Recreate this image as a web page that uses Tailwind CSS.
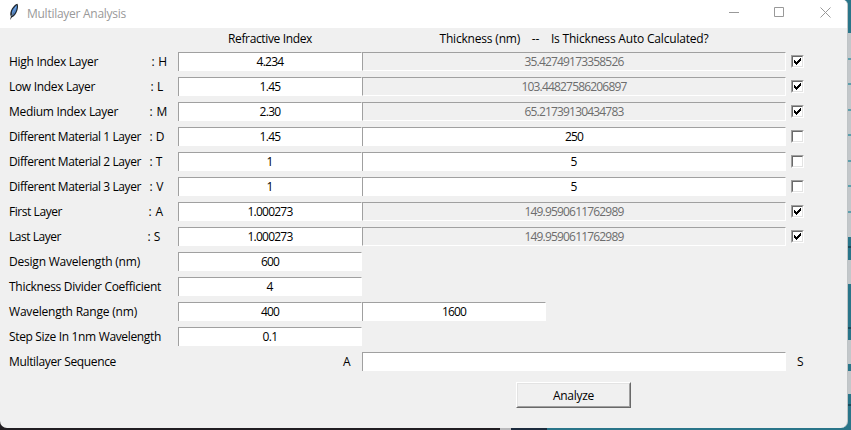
<!DOCTYPE html>
<html lang="en">
<head>
<meta charset="utf-8">
<title>Multilayer Analysis</title>
<script src="https://cdn.jsdelivr.net/npm/@tailwindcss/browser@4"></script>
</head>
<body class="w-[851px] h-[430px] overflow-hidden bg-[#211e22] font-['Open_Sans','Noto_Sans',sans-serif] text-[12px] leading-[19px] text-black relative">
<!-- desktop behind the window -->
<svg class="absolute inset-0" width="851" height="430" shape-rendering="crispEdges">
<rect x="500" y="426" width="11" height="4" fill="#b9b9bb"/><rect x="511" y="426" width="36" height="4" fill="#1c2b3d"/><rect x="547" y="426" width="304" height="4" fill="#2a7589"/>
<rect x="840" width="11" height="430" fill="#c3c7ca"/>
<g fill="#2a7589"><rect x="840" width="11" height="33"/><rect x="840" y="237" width="11" height="23"/><rect x="840" y="284" width="11" height="56"/><rect x="840" y="364" width="11" height="7"/><rect x="840" y="394" width="11" height="36"/></g>
<g fill="#5f9eab"><rect x="840" y="58" width="11" height="2"/><rect x="840" y="83" width="11" height="2"/><rect x="840" y="109" width="11" height="2"/><rect x="840" y="134" width="11" height="2"/><rect x="840" y="160" width="11" height="2"/><rect x="840" y="185" width="11" height="2"/><rect x="840" y="211" width="11" height="2"/></g>
<g fill="#174c5e"><rect x="840" y="246" width="11" height="2"/><rect x="840" y="327" width="11" height="2"/><rect x="840" y="404" width="11" height="2"/></g>
</svg>
<main class="relative w-[848px] h-[428px] bg-[#f0f0f0] rounded-b-[7px] rounded-tr-[5px] overflow-hidden border-r border-[#bfc4c6]">
<header class="h-7 bg-white flex items-center text-[#999]">
<svg class="ml-[9px] -mt-1 shrink-0" width="10" height="18" viewBox="0 0 10 18"><path d="M8.4.8C9.6 2.600 9 7 7.300 10 6.200 12 4.500 14 3 14.200L1 17l.9-3.500C.5 11.500 1.500 8 3 5.500 4.800 2.800 6.500 1.200 8.400.8Z" fill="#23292f"/><path d="M7.800 2C8.200 5 7.200 8 5.400 10.800L3.500 12.800 6.500 5 3 11.500C2.500 9.500 3.200 7.600 4.300 5.800Z" fill="#4c8ad8"/><path d="M7 3.500 2.600 13" stroke="#a9cdf5" stroke-width=".6"/></svg>
<span class="ml-2 whitespace-pre -mt-0.5" data-w="99">Multilayer Analysis</span>
<svg class="ml-auto mr-[16px] -mt-0.5" width="102" height="12" viewBox="0 0 102 12" fill="none" stroke="#999"><path d="M0 5.500h10M45.500.5h9v9h-9ZM91.500.5l10 10M101.500.5l-10 10"/></svg>
</header>
<div class="h-6 flex items-start pt-px">
<div class="ml-[178px] w-[184px] flex justify-center"><span class="whitespace-pre" data-w="84">Refractive Index</span></div>
<div class="w-[424px] flex justify-center"><span class="whitespace-pre" data-w="269">Thickness (nm)    --    Is Thickness Auto Calculated?</span></div>
</div>
<div id="rows"></div>
<div class="h-[25px] flex">
<div class="ml-[9px] w-[334px]"><span class="whitespace-pre" data-w="107">Multilayer Sequence</span></div>
<div class="w-[19px]"><span data-w="8">A</span></div>
<div class="w-[424px] h-[19px] bg-white border-t border-l border-r border-t-[#a0a0a0] border-l-[#a0a0a0] border-r-white"></div>
<span class="ml-[11px]" data-w="6">S</span>
</div>
<button class="mt-[5px] ml-[516px] w-[115px] h-[26px] border border-t-white border-l-white border-r-[#696969] border-b-[#696969] flex">
<span class="w-full h-full border border-t-[#e3e3e3] border-l-[#e3e3e3] border-r-[#a0a0a0] border-b-[#a0a0a0] flex justify-center items-center"><span data-w="41">Analyze</span></span>
</button>
</main>
<script>
const rows = [
 ['High Index Layer',89,'H',151,16,'4.234',27,'35.42749173358526',99,1],
 ['Low Index Layer',86,'L',150,13,'1.45',21,'103.44827586206897',105,1],
 ['Medium Index Layer',109,'M',149,18,'2.30',21,'65.21739130434783',99,1],
 ['Different Material 1 Layer',132,'D',149,15,'1.45',21,'250',18,0],
 ['Different Material 2 Layer',132,'T',149,13,'1',6,'5',6,0],
 ['Different Material 3 Layer',132,'V',149,14,'1',6,'5',6,0],
 ['First Layer',53,'A',148,15,'1.000273',45,'149.9590611762989',99,1],
 ['Last Layer',52,'S',147,13,'1.000273',45,'149.9590611762989',99,1],
 ['Design Wavelength (nm)',131,'',0,0,'600',18],
 ['Thickness Divider Coefficient',152,'',0,0,'4',6],
 ['Wavelength Range (nm)',128,'',0,0,'400',18,'1600',24],
 ['Step Size In 1nm Wavelength',152,'',0,0,'0.1',15]
];
const text = (t, w) => `<span class="whitespace-pre" data-w="${w}">${t}</span>`;
const check = on => `<div class="ml-[5px] mt-[3px] w-[13px] h-[13px] border border-t-[#a0a0a0] border-l-[#a0a0a0] border-r-white border-b-white"><div class="w-[11px] h-[11px] bg-white border border-t-[#696969] border-l-[#696969] border-r-[#e3e3e3] border-b-[#e3e3e3]">${on ? '<svg width="9" height="9" viewBox="0 0 9 9" shape-rendering="crispEdges"><path d="M1 3h1v1h1v1h1v-1h1v-1h1v-1h1v-1h1v3h-1v1h-1v1h-1v1h-1v1h-1v-1h-1v-1h-1Z"/></svg>' : ''}</div></div>`;
document.getElementById('rows').innerHTML = rows.map(([label, lw, code, cx, cw, n, nw, t, tw, auto]) => `<div class="h-[25px] flex items-start">
<div class="ml-[9px] shrink-0" style="width:${code ? cx - 8.5 : 169}px">${text(label, lw)}</div>
${code ? `<div class="shrink-0" style="width:${177.5 - cx}px">${text(': ' + code, cw)}</div>` : ''}
<div class="w-[184px] h-[19px] bg-white border-t border-l border-r border-t-[#a0a0a0] border-l-[#a0a0a0] border-r-white flex justify-center leading-[18px]">${text(n, nw)}</div>
${t ? `<div class="${auto === undefined ? 'w-[184px]' : 'w-[424px]'} h-[19px] border-t border-l border-r border-r-white border-t-[#a0a0a0] border-l-[#a0a0a0] ${auto ? 'border-b border-b-white text-[#6d6d6d]' : 'bg-white'} flex justify-center leading-[18px]">${text(t, tw)}</div>` : ''}
${auto === undefined ? '' : check(auto)}
</div>`).join('');
// tighten or loosen each run so that it fills its nominal width
const ctx = document.createElement('canvas').getContext('2d');
ctx.font = '12px "Open Sans"';
document.querySelectorAll('[data-w]').forEach(e => {
 const n = e.textContent.length;
 const d = (+e.dataset.w - ctx.measureText(e.textContent).width) / n;
 if (n > 1) e.style.letterSpacing = d.toFixed(3) + 'px';
});
</script>
</body>
</html>
